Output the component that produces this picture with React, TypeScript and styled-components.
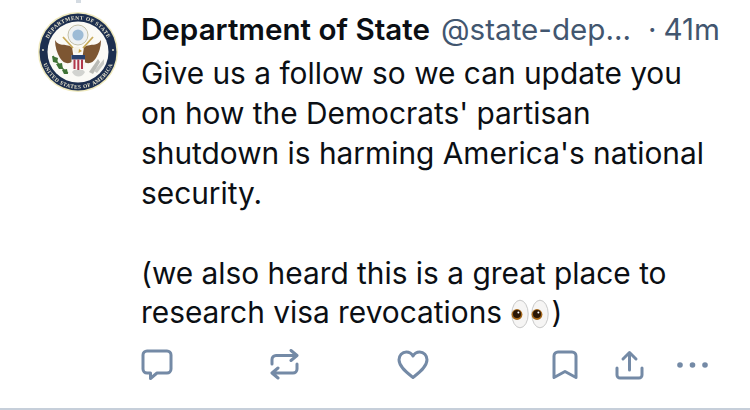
import React from "react";
import styled, { createGlobalStyle } from "styled-components";

const Global = createGlobalStyle`
  html, body { margin: 0; padding: 0; background: #fff; }
  body { font-family: Inter, "Liberation Sans", sans-serif; -webkit-font-smoothing: antialiased; }
`;
const Post = styled.article`
  position: relative;
  box-sizing: border-box;
  width: 750px;
  height: 410px;
  background: #fff;
  border-bottom: 2px solid #c6cfda;
  display: flex;
  padding: 12px 0 0 38px;
  gap: 23px;
  overflow: hidden;
`;
const ThreadStub = styled.div`
  position: absolute;
  left: 76px;
  top: 0;
  width: 5px;
  height: 3px;
  background: #d4dbe2;
`;
const AvatarWrap = styled.div`
  width: 80px;
  height: 80px;
  flex: none;
  filter: blur(0.4px);
`;
const Body = styled.div`
  flex: 1;
  min-width: 0;
  display: flex;
  flex-direction: column;
`;
const Header = styled.div`
  display: flex;
  align-items: baseline;
  height: 34px;
  white-space: nowrap;
  line-height: 34px;
  font-size: 29.6px;
`;
const Name = styled.span`
  font-weight: 600;
  color: #0b0f14;
  margin-right: 11px;
`;
const Handle = styled.span`
  color: #42566f;
  font-weight: 400;
`;
const Sep = styled.span`
  color: #42566f;
  margin: 0 7px 0 17px;
`;
const Text = styled.p`
  margin: 8px 0 0;
  width: 590px;
  font-size: 29.85px;
  line-height: 39.9px;
  color: #0b0f14;
  font-weight: 400;
  white-space: pre-wrap;
`;
const EyesIcon = styled.svg`
  display: inline-block;
  width: 38px;
  height: 30px;
  vertical-align: -6px;
  margin: 0 2px 0 1px;
`;
const Actions = styled.div`
  display: grid;
  grid-template-columns: 129px 127px 155px 63px 62px auto;
  align-items: center;
  justify-items: start;
  margin-top: 16px;
  height: 32px;
`;
const Icon = styled.svg`
  display: block;
  fill: none;
  stroke: #748aa6;
  stroke-width: 3;
  stroke-linecap: round;
  stroke-linejoin: round;
`;
const Dots = styled.svg`
  display: block;
  fill: #748aa6;
`;

const Seal = () => (
  <svg width="80" height="80" viewBox="0 0 80 80" role="img" aria-label="Seal">
    <circle cx="40" cy="40" r="40" fill="#efe9bd" />
    <circle cx="40" cy="40" r="38.5" fill="#1d2f4f" />
    <circle cx="40" cy="40" r="30.5" fill="#fbfaf6" />
    <defs>
      <path id="sealTop" d="M 7.6 40 A 32.4 32.4 0 0 1 72.4 40" />
      <path id="sealBottom" d="M 3.3 40 A 36.7 36.7 0 0 0 76.7 40" />
    </defs>
    <text fontFamily="'Liberation Serif', serif" fontSize="5.4" fontWeight="700" fill="#eee9d0" letterSpacing="0.5">
      <textPath href="#sealTop" startOffset="50%" textAnchor="middle">DEPARTMENT OF STATE</textPath>
    </text>
    <text fontFamily="'Liberation Serif', serif" fontSize="5.4" fontWeight="700" fill="#eee9d0" letterSpacing="0.5">
      <textPath href="#sealBottom" startOffset="50%" textAnchor="middle">UNITED STATES OF AMERICA</textPath>
    </text>
    <circle cx="5" cy="38" r="0.9" fill="#eee9d0" />
    <circle cx="75" cy="38" r="0.9" fill="#eee9d0" />
    <circle cx="40" cy="23" r="10" fill="#eef1f3" stroke="#c4c0a8" strokeWidth="1" />
    <circle cx="40" cy="23" r="5.6" fill="#9dbbd6" />
    <path d="M17 28 C21 35 26 31 34 35 L36 48 C31 53 26 52 22 46 C19 41 17 35 17 28Z" fill="#7d5632" />
    <path d="M63 28 C59 35 54 31 46 35 L44 48 C49 53 54 52 58 46 C61 41 63 35 63 28Z" fill="#7d5632" />
    <path d="M25 25 L35 36 M55 25 L45 36" stroke="#c9ab5a" strokeWidth="1.8" />
    <circle cx="39" cy="38" r="3.4" fill="#f4f1e6" />
    <path d="M41 37 L44 39 L40.5 41Z" fill="#c9a23e" />
    <path d="M33.5 43 H47 V55 C45 60 35.5 60 33.5 55Z" fill="#f5f3f0" />
    <path d="M33.5 43 H47 V47.5 H33.5Z" fill="#27406e" />
    <path d="M35.5 47.5 H37.5 V57 H35.5Z M39.3 47.5 H41.3 V58 H39.3Z M43 47.5 H45 V57 H43Z" fill="#b2374a" />
    <path d="M15 44 C19 50 23 57 30 61" stroke="#4c7a3c" strokeWidth="1.4" fill="none" />
    <path d="M14 44 L20 46 L19 51 L15 50Z M18 52 L24 51 L25 57 L21 57Z M24 58 L29 57 L30 62 L26 62Z" fill="#3f7336" />
    <path d="M51 60 L60 47 L62 50 L55 62Z" fill="#b9bab5" />
    <path d="M56 59 L66 47 L66 52 L59 61Z" fill="#c9cac6" />
    <path d="M34 60 C37 66 44 66 47 60 L45 58 H36Z" fill="#d2d3d0" />
  </svg>
);

const Eye = ({ x }: { x: number }) => (
  <g>
    <ellipse cx={x} cy="15" rx="8.2" ry="13.8" fill="#f6f5f4" stroke="#c9c9c9" strokeWidth="1" />
    <circle cx={x - 3} cy="15.5" r="5.4" fill="#a5681c" />
    <circle cx={x - 3} cy="15" r="4" fill="#2a1708" />
    <circle cx={x - 1.6} cy="13.4" r="1" fill="#fff" />
  </g>
);

export default function App() {
  return (
    <>
      <Global />
      <Post>
        <ThreadStub />
        <AvatarWrap><Seal /></AvatarWrap>
        <Body>
          <Header>
            <Name>Department of State</Name>
            <Handle>@state-dep...</Handle>
            <Sep>·</Sep>
            <Handle>41m</Handle>
          </Header>
          <Text>
            {"Give us a follow so we can update you\non how the Democrats' partisan\nshutdown is harming America's national\nsecurity.\n\n(we also heard this is a great place to\nresearch visa revocations "}
            <EyesIcon viewBox="0 0 38 30" role="img" aria-label="eyes">
              <Eye x={9} />
              <Eye x={29} />
            </EyesIcon>
            )
          </Text>
          <Actions>
            <Icon width="32" height="32" viewBox="0 0 32 32">
              <path d="M6 2 H26 A4 4 0 0 1 30 6 V20 A4 4 0 0 1 26 24 H16 L9.5 29.5 V24 H6 A4 4 0 0 1 2 20 V6 A4 4 0 0 1 6 2Z" />
            </Icon>
            <Icon width="30" height="32" viewBox="0 0 30 32">
              <path d="M2 15 V10.5 A4 4 0 0 1 6 6.5 H26.500 M21 1.5 L27 6.5 L21 11.5" />
              <path d="M27 15 V20 A4 4 0 0 1 23 24 H2.500 M8 19 L2 24 L8 29" />
            </Icon>
            <Icon width="32" height="30" viewBox="0 0 32 30">
              <path d="M16 27.5 C11 23.5 2 17 2 9.8 C2 5.5 5.2 2 9.3 2 C12 2 14.5 3.3 16 6 C17.5 3.3 20 2 22.7 2 C26.8 2 30 5.5 30 9.8 C30 17 21 23.5 16 27.5Z" />
            </Icon>
            <Icon width="26" height="30" viewBox="0 0 26 30">
              <path d="M6 2 H20 A4 4 0 0 1 24 6 V27.5 L13 21.5 L2 27.5 V6 A4 4 0 0 1 6 2Z" />
            </Icon>
            <Icon width="29" height="30" viewBox="0 0 29 30">
              <path d="M14.5 20 V2.5 M8 9 L14.5 2.5 L21 9" />
              <path d="M2 18 V25 A3 3 0 0 0 5 28 H24 A3 3 0 0 0 27 25 V18" />
            </Icon>
            <Dots width="31" height="6" viewBox="0 0 31 6">
              <circle cx="3" cy="3" r="2.800" />
              <circle cx="15.500" cy="3" r="2.800" />
              <circle cx="28" cy="3" r="2.800" />
            </Dots>
          </Actions>
        </Body>
      </Post>
    </>
  );
}
